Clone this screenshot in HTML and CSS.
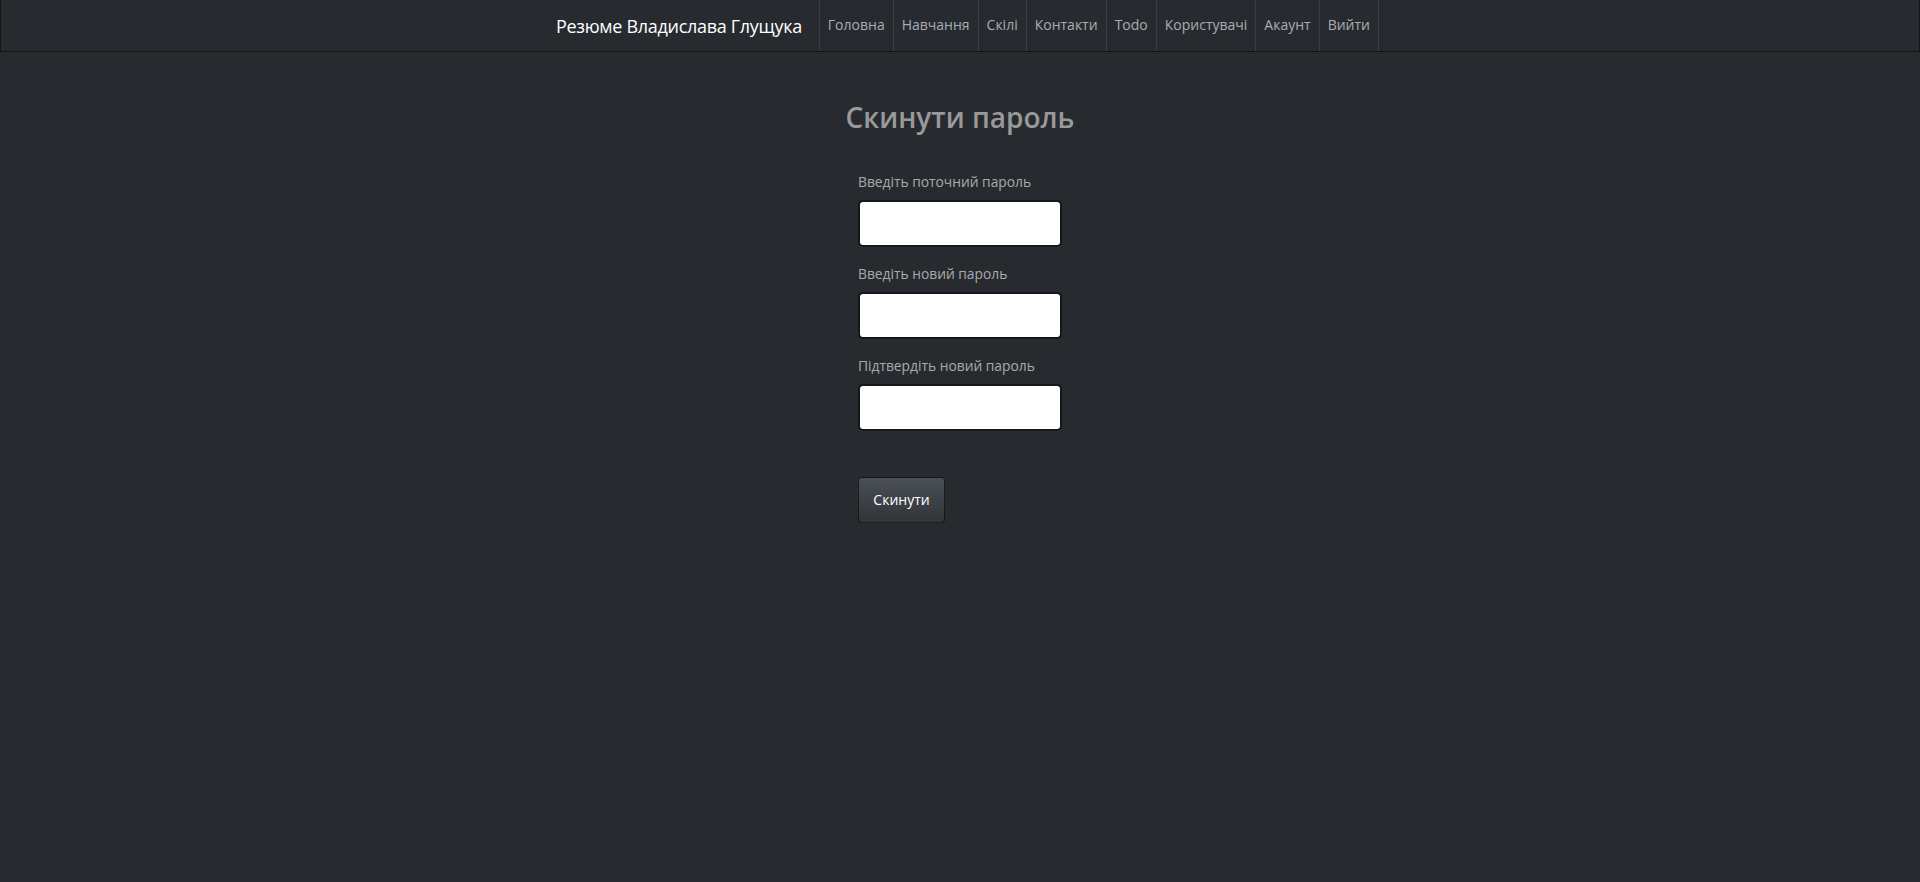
FILE: index.html
```html
<!DOCTYPE html>
<html lang="uk">
<head>
<meta charset="utf-8">
<title>Скинути пароль</title>
<link rel="stylesheet" href="styles.css">
</head>
<body>
<header class="navbar">
  <a class="brand" href="#">Резюме Владислава Глущука</a>
  <ul class="nav">
    <li><a href="#">Головна</a></li>
    <li><a href="#">Навчання</a></li>
    <li><a href="#">Скілі</a></li>
    <li><a href="#">Контакти</a></li>
    <li><a href="#">Todo</a></li>
    <li><a href="#">Користувачі</a></li>
    <li><a href="#">Акаунт</a></li>
    <li><a href="#">Вийти</a></li>
  </ul>
</header>
<main class="page">
  <h2 class="title">Скинути пароль</h2>
  <form class="form">
    <div class="field">
      <label class="label" for="cur">Введіть поточний пароль</label>
      <input class="input" id="cur" type="password">
    </div>
    <div class="field">
      <label class="label" for="new">Введіть новий пароль</label>
      <input class="input" id="new" type="password">
    </div>
    <div class="field">
      <label class="label" for="conf">Підтвердіть новий пароль</label>
      <input class="input" id="conf" type="password">
    </div>
    <button class="btn" type="button">Скинути</button>
  </form>
</main>
</body>
</html>
```

FILE: styles.css
```css
* { box-sizing: border-box; }
html, body { height: 100%; }
body {
  margin: 0;
  background: #272b30;
  font-family: "Open Sans", "Noto Sans", sans-serif;
  color: #aaa;
}
.navbar {
  display: flex;
  justify-content: center;
  align-items: stretch;
  height: 52px;
  background: #272b30;
  border: 1px solid #111316;
  border-top: none;
}
.brand {
  display: flex;
  align-items: center;
  padding: 0 17px 0 15px;
  font-size: 18px;
  color: #fff;
  text-decoration: none;
  letter-spacing: -0.3px;
}
.nav {
  display: flex;
  margin: 0;
  padding: 0;
  list-style: none;
}
.nav li {
  display: flex;
  border-left: 1px solid #3a3e44;
}
.nav li:last-child { border-right: 1px solid #3a3e44; }
.nav a {
  display: flex;
  align-items: center;
  padding: 0 8px 2px;
  font-size: 14px;
  color: #a8adb3;
  text-decoration: none;
}
.page {
  display: flex;
  flex-direction: column;
  align-items: center;
}
.title {
  margin: 49px 0 39px;
  font-size: 28px;
  line-height: 32px;
  font-weight: 600;
  color: #999;
}
.form {
  width: 204px;
  display: flex;
  flex-direction: column;
}
.field {
  display: flex;
  flex-direction: column;
  margin-bottom: 17px;
}
.label {
  font-size: 13.8px;
  line-height: 20px;
  color: #aaa;
  margin-bottom: 8px;
}
.input {
  width: 204px;
  height: 47px;
  background: #fff;
  border: 2px solid #15171a;
  border-radius: 5px;
  padding: 6px 12px;
  font-size: 14px;
}
.btn {
  align-self: flex-start;
  margin-top: 29px;
  width: 87px;
  height: 46px;
  border: 1px solid rgba(0,0,0,0.6);
  border-radius: 4px;
  background: linear-gradient(#4b5056, #3a3f44 60%, #313539);
  color: #fff;
  font-family: inherit;
  font-size: 14px;
  padding: 0 0 2px;
}
```
